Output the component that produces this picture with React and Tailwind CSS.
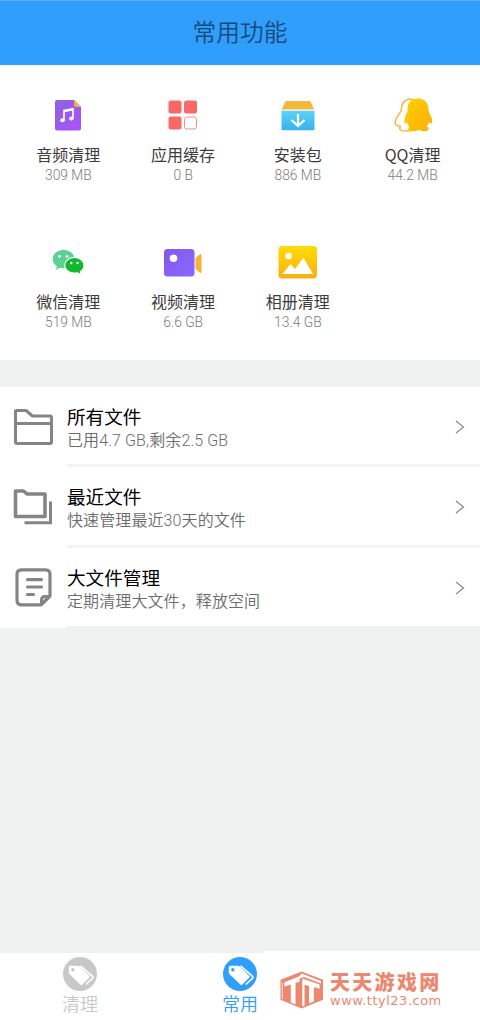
import clsx from 'clsx'

const AudioIcon = () => (
  <svg width="48" height="48" viewBox="0 0 48 48">
    <defs>
      <linearGradient id="audio" x1="0" y1="0" x2="1" y2="1">
        <stop offset="0" stopColor="#8d62e0" />
        <stop offset="1" stopColor="#ab52f8" />
      </linearGradient>
    </defs>
    <path d="M13 9h17l7 7v21.500q0 2-2 2H13q-2 0-2-2V11q0-2 2-2z" fill="url(#audio)" />
    <path d="M30 9l7 7h-5q-2 0-2-2z" fill="#f2b233" />
    <path d="M20 29V19.300l9-1.700v9.800M20 20.500l9-1.700" fill="none" stroke="#fff" strokeWidth="1.600" />
    <ellipse cx="18.500" cy="29.200" rx="2.300" ry="2" fill="#fff" />
    <ellipse cx="27.400" cy="27.600" rx="2.200" ry="2" fill="#fff" />
  </svg>
)

const CacheIcon = () => (
  <svg width="48" height="48" viewBox="0 0 48 48">
    <rect x="9.500" y="9.500" width="13" height="13" rx="2.500" fill="#fa6767" />
    <rect x="25" y="9.500" width="13" height="13" rx="2.500" fill="#fa6767" />
    <rect x="9.500" y="25.500" width="13" height="13" rx="2.500" fill="#fa6767" />
    <rect x="25.500" y="26" width="12" height="12" rx="2.500" fill="none" stroke="#f08c8c" />
  </svg>
)

const PackageIcon = () => (
  <svg width="48" height="48" viewBox="0 0 48 48">
    <defs>
      <linearGradient id="package" x1="0" y1="0" x2="0" y2="1">
        <stop offset="0" stopColor="#5ed2f8" />
        <stop offset="1" stopColor="#38b2ef" />
      </linearGradient>
    </defs>
    <path d="M13 10h22q1.500 0 2 1.300l3.200 7.200H7.600L11 11.300Q11.500 10 13 10z" fill="#f4b83c" />
    <path d="M7.500 19.700h33v18.500q0 1-1 1h-31q-1 0-1-1z" fill="url(#package)" />
    <path d="M24 23v12M17.500 29l6.500 6 6.500-6" fill="none" stroke="#fff" strokeWidth="2.200" />
  </svg>
)

const QQIcon = () => (
  <svg width="48" height="48" viewBox="0 0 48 48">
    <defs>
      <linearGradient id="qq" x1="0" y1="0" x2="1" y2="1">
        <stop offset="0" stopColor="#ffd000" />
        <stop offset="1" stopColor="#faae08" />
      </linearGradient>
    </defs>
    <path
      d="M24 8.500c-6-1.500-11 2-11.500 8.500l-.3 3C8.500 25 6.500 27.500 6.200 31c0 3 1 4 3 3.500l2.300 1c-2 2-.5 4.500 4 4.500h5l3-2z"
      fill="#fff"
      stroke="#f7b94d"
      strokeWidth="1.600"
    />
    <path
      d="M29 7.500c7 0 10.500 5 10.500 11 0 2 .3 2.500 1.200 4 1.600 3 2.800 6 2.500 9-.3 1.500-2 1.200-3.200-.5-.3 1.500-1.200 3-2.500 4 3 1.500 3 4.500-.5 5-3 .3-5.500-.3-7-1.300-2 1.300-5 1.800-8 1.300-3-.5-3.500-2.500-1.500-4.500-1.500-1-2.300-3-2.600-4.500-1.500 2-3 2-2.500-.5.300-3 1-6 2.300-8.500 1.200-1.500.8-2 .8-4 0-6 3.500-10.500 10.500-10.500z"
      fill="url(#qq)"
    />
  </svg>
)

const WechatIcon = () => (
  <svg width="48" height="48" viewBox="0 0 48 48">
    <path
      d="M19.500 12c6.200 0 10.900 3.900 10.900 9s-4.700 9.300-10.900 9.300c-1.400 0-2.700-.2-4-.6L12 32l.8-3.800C10.200 26.500 8.700 24 8.700 21c0-5.100 4.800-9 10.800-9z"
      fill="#5bd293"
    />
    <path
      d="M30.400 19.400c5.400 0 9.600 3.500 9.600 8 0 2.600-1.400 4.700-3.500 6.200l.9 3.400-3.700-2.200c-1 .3-2.100.4-3.300.4-5.400 0-9.600-3.400-9.600-7.800 0-4.500 4.200-8 9.600-8z"
      fill="#10b930"
      stroke="#fff"
      strokeWidth="1.200"
    />
    <circle cx="15.500" cy="18.300" r="1.400" fill="#fff" />
    <circle cx="23" cy="18.300" r="1.400" fill="#fff" />
    <circle cx="27.300" cy="25" r="1.200" fill="#fff" />
    <circle cx="33.500" cy="25" r="1.200" fill="#fff" />
  </svg>
)

const VideoIcon = () => (
  <svg width="48" height="48" viewBox="0 0 48 48">
    <defs>
      <linearGradient id="video" x1="0" y1="0" x2="1" y2="1">
        <stop offset="0" stopColor="#8457ea" />
        <stop offset="1" stopColor="#8a69ff" />
      </linearGradient>
    </defs>
    <path d="M36.500 20l4.500-3.700q1.500-1 1.500.7v17q0 1.700-1.500.7L36.500 31z" fill="#f9b233" />
    <rect x="5" y="11" width="30.500" height="27.500" rx="3.500" fill="url(#video)" />
    <circle cx="14.500" cy="20.300" r="3.800" fill="#fff" />
  </svg>
)

const AlbumIcon = () => (
  <svg width="48" height="48" viewBox="0 0 48 48">
    <defs>
      <linearGradient id="album" x1="0" y1="0" x2="0" y2="1">
        <stop offset="0" stopColor="#fedc08" />
        <stop offset="1" stopColor="#faaf12" />
      </linearGradient>
    </defs>
    <rect x="4.500" y="8" width="38.500" height="32.500" rx="3.500" fill="url(#album)" />
    <circle cx="14.500" cy="18" r="3.200" fill="#fff" />
    <path d="M8.300 36l8.200-10 4.500 5 8.500-11.200 9.500 16.200z" fill="#fff" />
  </svg>
)

const FolderIcon = () => (
  <svg width="42" height="42" viewBox="0 0 42 42" fill="none" stroke="#858585" strokeWidth="3" strokeLinejoin="round">
    <path d="M4.500 4.500h9.500l6.500 5.500H38q1.500 0 1.500 1.500V36q0 1.500-1.500 1.500H5Q3.500 37.500 3.500 36V5.500q0-1 1-1z" />
    <path d="M3.500 17.500h36" />
  </svg>
)

const RecentIcon = () => (
  <svg width="42" height="42" viewBox="0 0 42 42" fill="none" stroke="#858585" strokeLinejoin="round">
    <path d="M3.500 5h8l3.500 3h18v22.500H3.500z" strokeWidth="3.600" />
    <path d="M38.500 15.500v21.200h-26" strokeWidth="3" strokeLinejoin="miter" />
  </svg>
)

const BigFileIcon = () => (
  <svg width="42" height="42" viewBox="0 0 42 42" fill="none" stroke="#858585" strokeWidth="3.200" strokeLinejoin="round">
    <path d="M9.500 2.800h24q4.500 0 4.500 4.500v21.500l-9 9H9.500Q5 37.800 5 33.300v-26q0-4.500 4.500-4.500z" />
    <path d="M29.500 37.500v-4.500q0-3.500 3.500-3.500h4.500z" strokeWidth="3" />
    <path d="M15.500 12.600h14M15.500 20h14M15.500 27.500h6" strokeLinecap="round" />
  </svg>
)

const ChevronIcon = () => (
  <svg width="10" height="14" viewBox="0 0 10 14" fill="none" stroke="#8c8c8c" strokeWidth="1.300">
    <path d="M1 1l7.500 6L1 13" />
  </svg>
)

const TagIcon = () => (
  <svg width="34" height="34" viewBox="0 0 34 34">
    <circle cx="17" cy="17" r="17" fill="currentColor" />
    <path d="M17.500 8.800l11.800 10.300q1.200 1.200 0 2.400l-6.500 6" fill="none" stroke="#fff" strokeWidth="1.700" strokeLinejoin="round" />
    <path
      d="M7.500 8.700H15q1 0 1.700.7l9.500 9.300q1 1 0 2l-6.800 6.800q-1 1-2 0L6.500 17.200Q5.800 16.500 5.800 15.500v-5q0-1.800 1.700-1.800z"
      fill="#fff"
    />
    <circle cx="9.800" cy="12.800" r="1.700" fill="currentColor" />
  </svg>
)

const SiteLogo = () => (
  <svg width="44" height="38" viewBox="0 0 44 38">
    <path d="M21.500 0.500L43 8.800v20L21.500 37.500 0.500 28.800v-20z" fill="#ec8870" />
    <path d="M21.500 2.500L41 10v2.500L24 6l-4.500 1.500v3.300l-4 1.200v21.500L10.800 31.500V13.500L4.500 15.500v-4.300l15-6z" fill="#fff" />
    <path d="M22.300 7.500L39.500 13.500v4.300l-5.700-1.600v14.300l-4.800 2V14.900l-4.500-1.200v20.800l-2.200.8z" fill="#fff" />
    <path d="M2.300 11.500v16.500" stroke="#fff" strokeWidth="0.800" />
  </svg>
)

const tools = [
  { name: '音频清理', size: '309 MB', icon: AudioIcon },
  { name: '应用缓存', size: '0 B', icon: CacheIcon },
  { name: '安装包', size: '886 MB', icon: PackageIcon },
  { name: 'QQ清理', size: '44.2 MB', icon: QQIcon },
  { name: '微信清理', size: '519 MB', icon: WechatIcon },
  { name: '视频清理', size: '6.6 GB', icon: VideoIcon },
  { name: '相册清理', size: '13.4 GB', icon: AlbumIcon },
]

const files = [
  { title: '所有文件', desc: '已用4.7 GB,剩余2.5 GB', icon: FolderIcon },
  { title: '最近文件', desc: '快速管理最近30天的文件', icon: RecentIcon },
  { title: '大文件管理', desc: '定期清理大文件，释放空间', icon: BigFileIcon },
]

const tabs = [
  { name: '清理', active: false },
  { name: '常用', active: true },
]

export default function App() {
  return (
    <div
      lang="zh-CN"
      className="w-[480px] h-[1020px] flex flex-col overflow-hidden bg-[#f0f2f2] whitespace-nowrap font-['Noto_Sans_CJK_SC',sans-serif]"
    >
      {/* Header */}
      <header className="h-[65px] shrink-0 flex items-center justify-center bg-[#309efc] border-t border-[#52b2fb] pb-[5px]">
        <h1 className="text-[23.700px] leading-8 font-[350] text-[#174a78]">常用功能</h1>
      </header>

      {/* Cleaning tools */}
      <section className="h-[295px] shrink-0 grid grid-cols-4 auto-rows-[147px] content-start bg-white pl-[11px] pr-[10px] pt-[26px]">
        {tools.map(({ name, size, icon: Icon }) => (
          <div key={name} className="flex flex-col items-center">
            <Icon />
            <span className="mt-[3px] text-base leading-6 text-[#3c3c3c]">{name}</span>
            <span className="mt-px font-[Roboto,sans-serif] text-[13.800px] leading-4 font-light text-[#7c7c7c]">{size}</span>
          </div>
        ))}
      </section>

      {/* File list */}
      <section className="mt-[27px] shrink-0 bg-white">
        {files.map(({ title, desc, icon: Icon }, i) => (
          <div key={title} className="h-[80.300px] flex items-center pl-3">
            <Icon />
            <div
              className={clsx(
                'ml-[13px] flex-1 h-full flex items-center justify-between pr-[15px]',
                i < files.length - 1 ? 'border-b-3 border-[#f3f4f4]' : 'border-b-2 border-[#f0f2f2]'
              )}
            >
              <div className="pt-[5px]">
                <p className="text-[18.600px] leading-6 text-black">{title}</p>
                <p className="mt-px font-[Roboto,'Noto_Sans_CJK_SC',sans-serif] text-base leading-6 font-[350] tracking-[0.100px] text-[#6c6c6c]">
                  {desc}
                </p>
              </div>
              <div className="pt-[3px]">
                <ChevronIcon />
              </div>
            </div>
          </div>
        ))}
      </section>

      {/* Tab bar */}
      <footer className="mt-auto h-[67px] shrink-0 grid grid-cols-3 bg-white">
        {tabs.map(({ name, active }) => (
          <div
            key={name}
            className={clsx('flex flex-col items-center pt-1', active ? 'text-[#309efc]' : 'text-[#c8c8c8]')}
          >
            <TagIcon />
            <span className="text-lg leading-[25px] font-[350]">{name}</span>
          </div>
        ))}
        <div className="-mt-[2px] -ml-14 h-[69px] flex items-center bg-white pl-4 pt-2">
          <SiteLogo />
          <div className="ml-1.5 text-[#ec8870]">
            <p className="text-[20px] leading-[20px] font-black tracking-[2.300px]">天天游戏网</p>
            <p className="mt-px font-['DejaVu_Sans',sans-serif] text-[13px] leading-[15px] tracking-[0.500px]">www.ttyl23.com</p>
          </div>
        </div>
      </footer>
    </div>
  )
}
